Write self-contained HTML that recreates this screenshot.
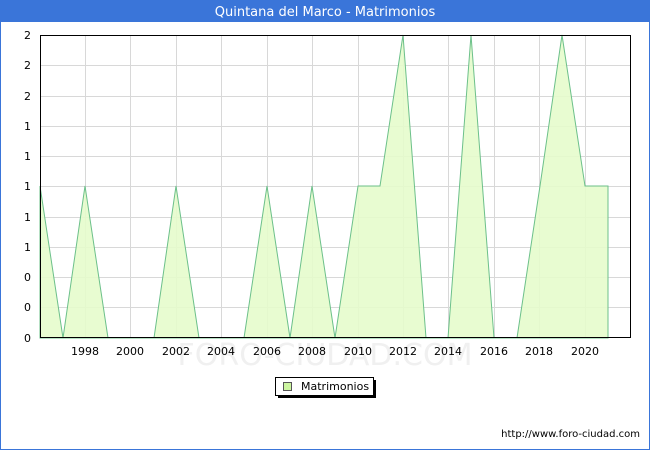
<!DOCTYPE html>
<html><head><style>
html,body{margin:0;padding:0;}
body{width:650px;height:450px;overflow:hidden;background:#fff;font-family:"DejaVu Sans","Liberation Sans",sans-serif;}
</style></head><body>
<svg width="650" height="450" xmlns="http://www.w3.org/2000/svg" font-family="DejaVu Sans, Liberation Sans, sans-serif">
<rect x="0.5" y="0.5" width="649" height="449" fill="#fff" stroke="#3a75d9"/>
<rect x="0" y="0" width="650" height="22" fill="#3a75d9"/>
<text x="325" y="16" fill="#fff" font-size="13" text-anchor="middle">Quintana del Marco - Matrimonios</text>
<g stroke="#d8d8d8" stroke-width="1">
<line x1="40" y1="65.5" x2="631" y2="65.5"/><line x1="40" y1="96.5" x2="631" y2="96.5"/>
<line x1="40" y1="126.5" x2="631" y2="126.5"/><line x1="40" y1="156.5" x2="631" y2="156.5"/>
<line x1="40" y1="186.5" x2="631" y2="186.5"/><line x1="40" y1="217.5" x2="631" y2="217.5"/>
<line x1="40" y1="247.5" x2="631" y2="247.5"/><line x1="40" y1="277.5" x2="631" y2="277.5"/>
<line x1="40" y1="307.5" x2="631" y2="307.5"/>
<line x1="85.5" y1="35" x2="85.5" y2="338"/><line x1="130.5" y1="35" x2="130.5" y2="338"/>
<line x1="176.5" y1="35" x2="176.5" y2="338"/><line x1="221.5" y1="35" x2="221.5" y2="338"/>
<line x1="267.5" y1="35" x2="267.5" y2="338"/><line x1="312.5" y1="35" x2="312.5" y2="338"/>
<line x1="358.5" y1="35" x2="358.5" y2="338"/><line x1="403.5" y1="35" x2="403.5" y2="338"/>
<line x1="448.5" y1="35" x2="448.5" y2="338"/><line x1="494.5" y1="35" x2="494.5" y2="338"/>
<line x1="539.5" y1="35" x2="539.5" y2="338"/><line x1="585.5" y1="35" x2="585.5" y2="338"/>
</g>
<polygon fill="#e6fccc" fill-opacity="0.9" stroke="#6cc08a" stroke-width="1" points="40,186 63,338 85,186 108,338 154,338 176,186 199,338 244,338 267,186 290,338 312,186 335,338 358,186 380,186 403,35 426,338 448,338 471,35 494,338 517,338 540,186 562,35 585,186 608,186 608,338 40,338"/>
<text x="325" y="365" font-size="30" fill="#f0f0f0" text-anchor="middle">FORO-CIUDAD.COM</text>
<rect x="40.5" y="35.5" width="590" height="302" fill="none" stroke="#000"/>
<g font-size="11" fill="#000" text-anchor="end">
<text x="31" y="39">2</text><text x="31" y="69">2</text><text x="31" y="100">2</text>
<text x="31" y="130">1</text><text x="31" y="160">1</text><text x="31" y="190">1</text>
<text x="31" y="221">1</text><text x="31" y="251">1</text><text x="31" y="281">0</text>
<text x="31" y="311">0</text><text x="31" y="342">0</text>
</g>
<g font-size="11" fill="#000" text-anchor="middle">
<text x="85" y="355">1998</text><text x="130" y="355">2000</text><text x="176" y="355">2002</text>
<text x="221" y="355">2004</text><text x="267" y="355">2006</text><text x="312" y="355">2008</text>
<text x="358" y="355">2010</text><text x="403" y="355">2012</text><text x="448" y="355">2014</text>
<text x="494" y="355">2016</text><text x="539" y="355">2018</text><text x="585" y="355">2020</text>
</g>
<rect x="278" y="380" width="98" height="18" fill="#000"/>
<rect x="275.5" y="377.5" width="98" height="18" fill="#fff" stroke="#000"/>
<rect x="283.5" y="382.5" width="8" height="8" fill="#ccf5a0" stroke="#555"/>
<text x="301" y="390" font-size="11" fill="#000">Matrimonios</text>
<text x="640" y="437" font-size="10" fill="#000" text-anchor="end">http://www.foro-ciudad.com</text>
</svg>
</body></html>
